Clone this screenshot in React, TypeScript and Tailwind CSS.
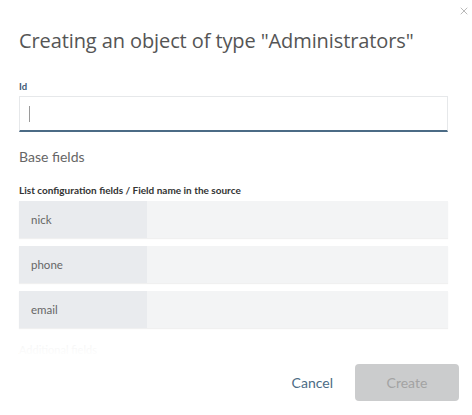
import { X } from 'lucide-react'

const rows = ['nick', 'phone', 'email']

export default function App() {
  return (
    <div className="relative w-[472px] h-[415px] bg-white overflow-hidden" style={{ fontFamily: 'Lato, "Open Sans", sans-serif' }}>
      {/* Close */}
      <button className="absolute top-[5px] right-[2px] text-[#8a8a8a]">
        <X className="w-[12px] h-[12px]" strokeWidth={1.2} />
      </button>

      <div className="pl-[19px] pr-[24px]">
        <h1
          className="pt-[26px] text-[20px] leading-[30px] text-[#555] whitespace-nowrap tracking-[-0.1px]"
          style={{ fontFamily: '"Open Sans", sans-serif' }}
        >
          Creating an object of type "Administrators"
        </h1>

        {/* Id */}
        <div className="mt-[24px] text-[9.5px] leading-[14px] font-bold text-[#3e5b75]">Id</div>
        <div className="mt-[2px] h-[36px] border border-[#e6e8ea] border-b-2 border-b-[#4b6b85] flex items-center pl-[9px]">
          <span className="w-px h-[16px] bg-[#9a9a9a]" />
        </div>

        {/* Base fields */}
        <div className="mt-[16px] text-[14px] leading-[18px] text-[#666]">Base fields</div>

        <div className="mt-[17px] text-[10px] leading-[14px] font-bold text-[#333]">
          List configuration fields / Field name in the source
        </div>

        <div className="mt-[4px] flex flex-col gap-[8px]">
          {rows.map(r => (
            <div key={r} className="flex h-[37px] shadow-[0_1px_1px_rgba(0,0,0,0.06)]">
              <div className="w-[128px] bg-[#e9ebee] flex items-center pl-[12px] text-[11.5px] text-[#666]">{r}</div>
              <div className="flex-1 bg-[#f3f4f5]" />
            </div>
          ))}
        </div>

        <div className="relative mt-[14px] h-[16px]">
          <div className="text-[11px] text-[#e2e2e2]">Additional fields</div>
          <div className="absolute inset-0 bg-gradient-to-b from-white/60 to-white" />
        </div>
      </div>

      {/* Footer */}
      <div className="absolute left-0 right-[13px] top-[364px] flex items-center justify-end gap-[22px]">
        <button className="text-[14px] text-[#4b6b85]">Cancel</button>
        <button className="w-[104px] h-[37px] rounded-[4px] bg-[#cbcccd] text-[14px] text-[#a3a3a3]">Create</button>
      </div>
    </div>
  )
}
